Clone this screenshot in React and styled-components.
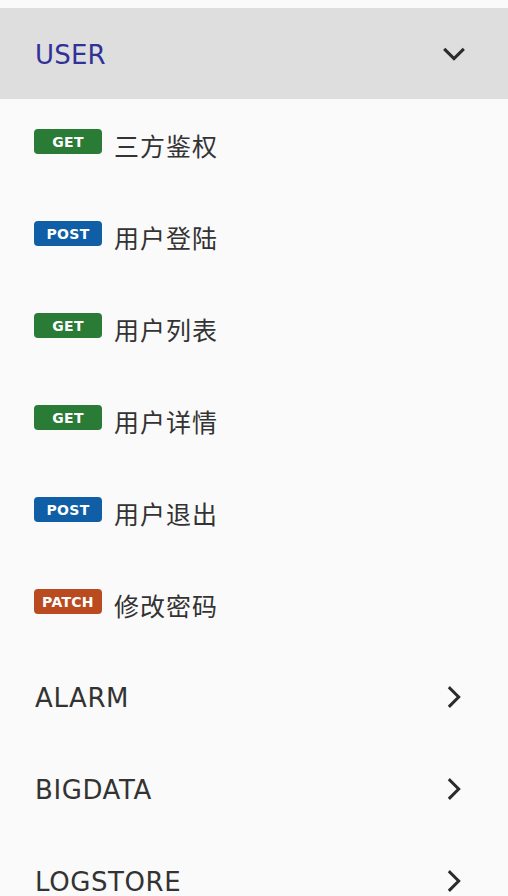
import React, { useState } from 'react';
import styled, { createGlobalStyle } from 'styled-components';

const GlobalStyle = createGlobalStyle`
  html, body {
    margin: 0;
    padding: 0;
    background: #fafafa;
  }
`;

const Page = styled.div`
  padding-top: 8px;
  background: #fafafa;
  font-family: "DejaVu Sans", "Noto Sans CJK SC", sans-serif;
`;

const GroupHeader = styled.div`
  display: flex;
  align-items: center;
  justify-content: space-between;
  height: ${(p) => (p.open ? '91px' : '92px')};
  padding: 0 40px 0 35px;
  background: ${(p) => (p.open ? '#dedede' : 'transparent')};
  cursor: pointer;
`;

const GroupTitle = styled.span`
  font-size: 26px;
  font-weight: 400;
  padding-top: 2px;
  letter-spacing: ${(p) => (p.open ? '0.2px' : '0.6px')};
  color: ${(p) => (p.open ? '#31319a' : '#333333')};
`;

const Chevron = styled.svg`
  width: 28px;
  height: 28px;
  flex: none;
`;

const Row = styled.div`
  display: flex;
  align-items: center;
  height: 92px;
  padding-left: 34px;
  gap: 12px;
`;

const colors = {
  GET: '#2a7b36',
  POST: '#0f5ea6',
  PATCH: '#ba4b20',
};

const Badge = styled.span`
  display: flex;
  align-items: center;
  justify-content: center;
  width: 68px;
  height: 25px;
  margin-bottom: 7px;
  border-radius: 4px;
  background: ${(p) => colors[p.method]};
  color: #fff;
  font-family: "DejaVu Sans", sans-serif;
  font-weight: 700;
  font-size: 14px;
  letter-spacing: 0.3px;
`;

const Label = styled.span`
  font-family: "Noto Sans CJK SC", sans-serif;
  font-size: 25px;
  letter-spacing: 1px;
  color: #333333;
`;

const groups = [
  {
    name: 'USER',
    items: [
      { method: 'GET', label: '三方鉴权' },
      { method: 'POST', label: '用户登陆' },
      { method: 'GET', label: '用户列表' },
      { method: 'GET', label: '用户详情' },
      { method: 'POST', label: '用户退出' },
      { method: 'PATCH', label: '修改密码' },
    ],
  },
  { name: 'ALARM', items: [] },
  { name: 'BIGDATA', items: [] },
  { name: 'LOGSTORE', items: [] },
];

const App = () => {
  const [open, setOpen] = useState('USER');

  return (
    <Page>
      <GlobalStyle />
      {groups.map((g) => {
        const isOpen = open === g.name;
        return (
          <div key={g.name}>
            <GroupHeader open={isOpen} onClick={() => setOpen(isOpen ? '' : g.name)}>
              <GroupTitle open={isOpen}>{g.name}</GroupTitle>
              <Chevron viewBox="0 0 24 24" fill="none" stroke="#2b2b2b" strokeWidth="2.6" strokeLinecap="square">
                {isOpen ? <path d="M4.5 8.5 L12 16 L19.5 8.5" /> : <path d="M8.5 4.5 L16 12 L8.5 19.5" />}
              </Chevron>
            </GroupHeader>
            {isOpen &&
              g.items.map((it) => (
                <Row key={it.label}>
                  <Badge method={it.method}>{it.method}</Badge>
                  <Label>{it.label}</Label>
                </Row>
              ))}
          </div>
        );
      })}
    </Page>
  );
};

export default App;
